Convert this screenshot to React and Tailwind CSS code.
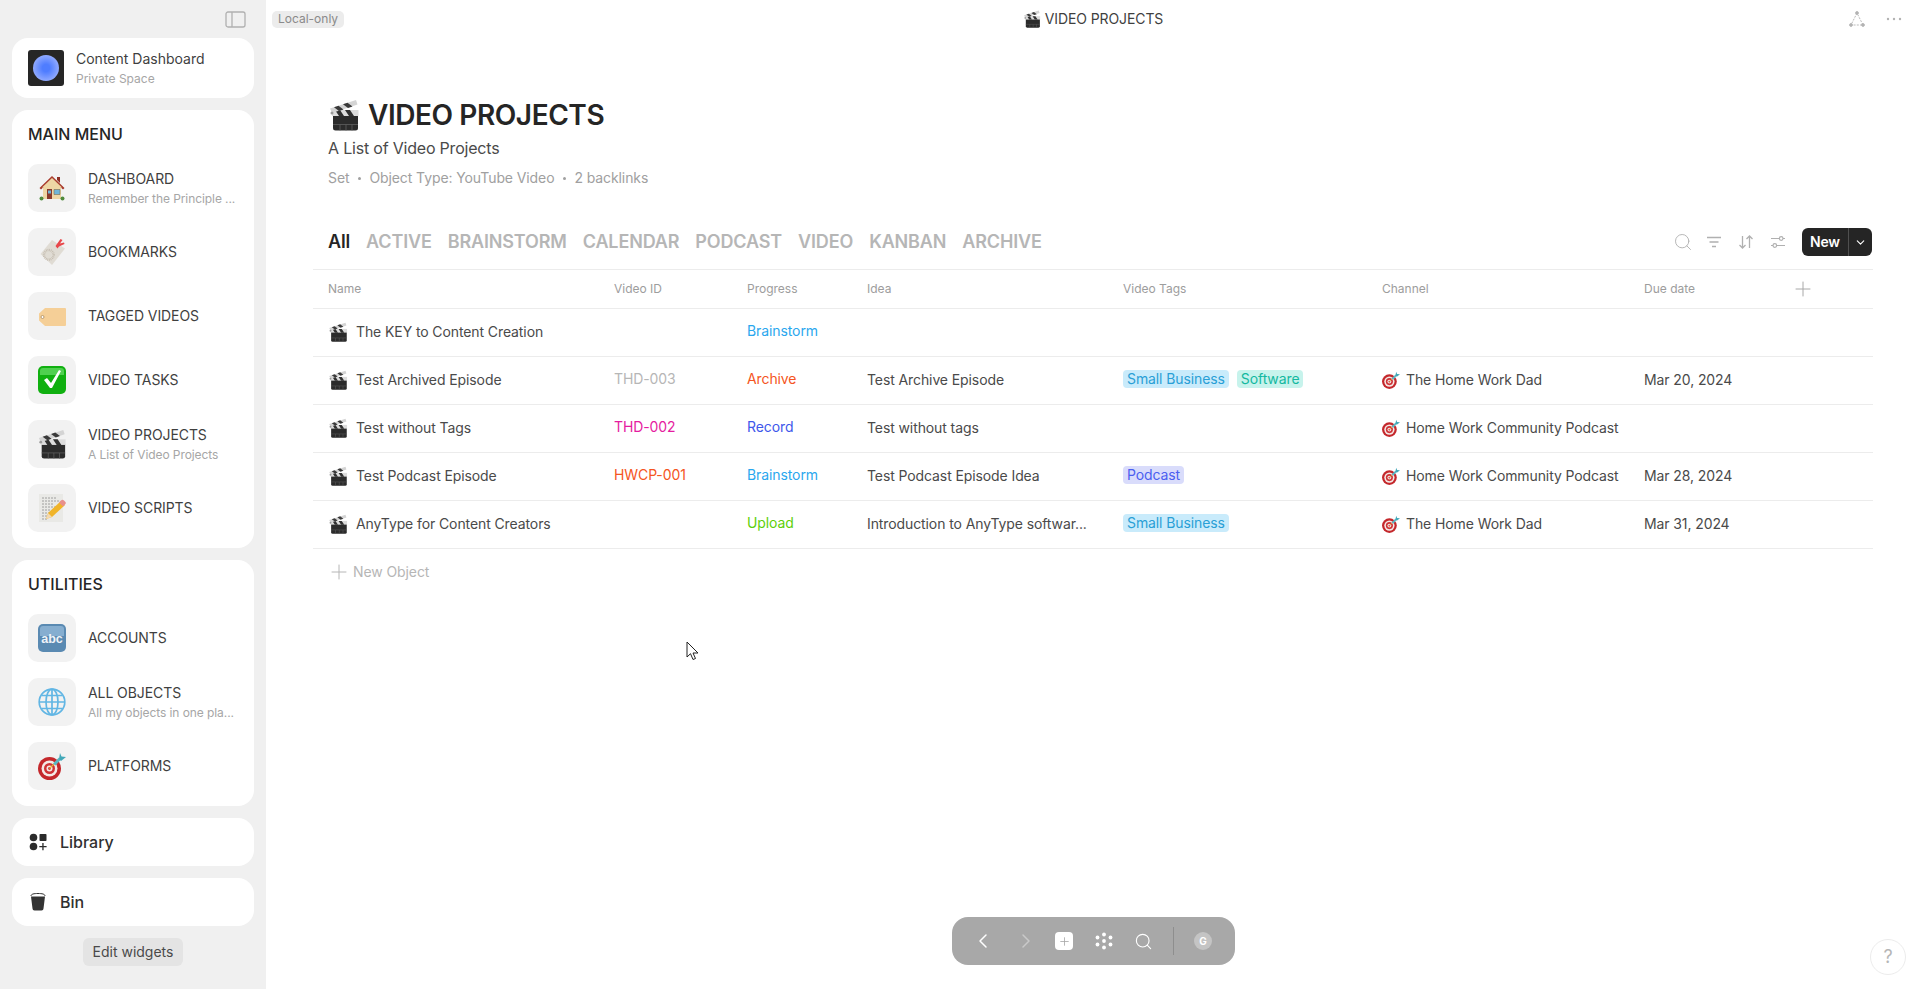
import React from "react";
import { ChevronLeft, ChevronRight, ChevronDown, Search, Plus } from "lucide-react";

const Clapper = ({ size = 20 }) => (
  <svg width={size} height={size} viewBox="0 0 32 32" className="shrink-0">
    <path d="M5 16h25v13a2.500 2.500 0 0 1-2.500 2.500h-20A2.500 2.500 0 0 1 5 29z" fill="#2b2b2b" />
    <path d="M5 25.500h25M12 25.500v6M18 25.500v6M24 25.500v6" stroke="#5f5f5f" strokeWidth="0.800" />
    <path d="M4 11h26.500v6H4z" fill="#dcdcdc" />
    <path d="M7 11l4 6h5l-4-6zM17 11l4 6h5l-4-6z" fill="#303030" />
    <path d="M2 9.500L28 1l1.500 4.500L4 14z" fill="#d4d4d4" />
    <path d="M6 8.200l5 3.800 4.500-1.500-5-3.800zM15 5.200l5 3.800 4.500-1.500-5-3.800z" fill="#3a3a3a" />
    <circle cx="4" cy="14" r="1.500" fill="#9a9a9a" />
  </svg>
);

const House = () => (
  <svg width="28" height="28" viewBox="0 0 28 28">
    <path d="M5 13h18v12H5z" fill="#eed6a5" />
    <path d="M14 2L1.500 14l1.500 1.500L14 5.500 25 15.500l1.500-1.500z" fill="#a83a2c" />
    <path d="M14 4L4 13.500h20z" fill="#eed6a5" />
    <path d="M19 3h3v6l-3-3z" fill="#8f2f25" />
    <path d="M9 15h5v10H9z" fill="#8a3a2c" />
    <path d="M10 16.500h3v3h-3z" fill="#6fb5d8" />
    <path d="M16 15.500h6v5h-6z" fill="#6fb5d8" stroke="#7d6b4f" strokeWidth="0.6" />
    <circle cx="3.500" cy="24.500" r="2" fill="#4f8a3c" />
    <circle cx="24.500" cy="24.500" r="2" fill="#4f8a3c" />
  </svg>
);

const Bookmark = () => (
  <svg width="28" height="28" viewBox="0 0 28 28">
    <path d="M2.500 16L14 2l13 8.500L14 27z" fill="#e0dcd4" />
    <circle cx="10.800" cy="16.800" r="4.800" fill="none" stroke="#c4bcb0" strokeWidth="2.400" strokeDasharray="0.800 0.800" />
    <path d="M17.500 8l5-7 2 1-2.500 3.500 4-1 .500 1.500-5.500 2.500-1.500 2z" fill="#e8474a" />
  </svg>
);

const Label = () => (
  <svg width="28" height="28" viewBox="0 0 28 28">
    <path d="M7 6h20a1 1 0 0 1 1 1v16a1 1 0 0 1-1 1H7l-6-5.500v-7z" fill="#f5cf97" />
    <circle cx="4.500" cy="15" r="1.500" fill="#fff" stroke="#a88a5f" strokeWidth="0.800" />
  </svg>
);

const Check = () => (
  <svg width="28" height="28" viewBox="0 0 28 28">
    <rect width="28" height="28" rx="5" fill="#10b010" />
    <path d="M2 5a3 3 0 0 1 3-3h18a3 3 0 0 1 3 3v4H2z" fill="#4fd04f" />
    <path d="M6 14l6 8 2 0 9-17-2-1-8 13-4-5z" fill="#fff" />
  </svg>
);

const Memo = () => (
  <svg width="28" height="28" viewBox="0 0 28 28">
    <path d="M1 0h24v28H1z" fill="#e9e9e6" />
    <path d="M4 4h15M4 7h17M4 10h12M4 13h16M4 16h9M4 19h8M4 22h6M4 25h5" stroke="#8a8a8a" strokeWidth="0.800" strokeDasharray="2 1" />
    <path d="M8 25l2-6 13-12 4 4-13 12z" fill="#f0b429" />
    <path d="M8 25l2-6 4 4z" fill="#f3d9b1" />
    <path d="M21 8.500l2-2a2 2 0 0 1 3 0l1 1a2 2 0 0 1 0 3l-2 2z" fill="#e8908c" />
  </svg>
);

const Abc = () => (
  <svg width="28" height="28" viewBox="0 0 28 28">
    <rect width="28" height="28" rx="5" fill="#5a8ab2" />
    <path d="M2 5a3 3 0 0 1 3-3h18a3 3 0 0 1 3 3v7H2z" fill="#86aed0" />
    <text x="14" y="18.500" textAnchor="middle" fontSize="12.500" fontWeight="700" fill="#eef3f8" fontFamily="Liberation Sans, sans-serif">abc</text>
  </svg>
);

const Globe = () => (
  <svg width="28" height="28" viewBox="0 0 28 28" fill="none" stroke="#62b6e4" strokeWidth="1.700">
    <circle cx="14" cy="14" r="12.800" />
    <ellipse cx="14" cy="14" rx="6" ry="12.800" />
    <path d="M14 1v26M1.500 14h25M3.500 7.500h21M3.500 20.500h21" />
  </svg>
);

const Target = ({ size = 28 }) => (
  <svg width={size} height={size} viewBox="0 0 28 28" className="shrink-0">
    <circle cx="11.500" cy="16.500" r="11.500" fill="#c4282c" />
    <circle cx="11.500" cy="16.500" r="8" fill="#f4e9e6" />
    <circle cx="11.500" cy="16.500" r="5.500" fill="#cf3236" />
    <circle cx="11.500" cy="16.500" r="3" fill="#f4e9e6" />
    <circle cx="11.500" cy="16.500" r="1.400" fill="#cf3236" />
    <path d="M11.500 16.500L21 7" stroke="#e8b23a" strokeWidth="1.200" />
    <path d="M15 11.500l6-6 2 2-5.500 6z" fill="#59b7c4" />
    <path d="M21 7l1-6 1.500 3.500L28 5l-5 4z" fill="#42a8b8" />
  </svg>
);

const MENU = [
  { icon: <House />, name: "DASHBOARD", desc: "Remember the Principle ..." },
  { icon: <Bookmark />, name: "BOOKMARKS" },
  { icon: <Label />, name: "TAGGED VIDEOS" },
  { icon: <Check />, name: "VIDEO TASKS" },
  { icon: <Clapper size={30} />, name: "VIDEO PROJECTS", desc: "A List of Video Projects" },
  { icon: <Memo />, name: "VIDEO SCRIPTS" },
];

const UTILITIES = [
  { icon: <Abc />, name: "ACCOUNTS" },
  { icon: <Globe />, name: "ALL OBJECTS", desc: "All my objects in one pla..." },
  { icon: <Target />, name: "PLATFORMS" },
];

const TABS = ["ACTIVE", "BRAINSTORM", "CALENDAR", "PODCAST", "VIDEO", "KANBAN", "ARCHIVE"];

const HOME_DAD = "The Home Work Dad";
const COMMUNITY = "Home Work Community Podcast";

const SMALL_BUSINESS = { label: "Small Business", className: "bg-[#c9ebfb] text-[#2a9fd6]" };
const SOFTWARE = { label: "Software", className: "bg-[#c7f3ec] text-[#14b8a0]" };
const PODCAST = { label: "Podcast", className: "bg-[#d9dcfb] text-[#4b5ff0]" };

const BRAINSTORM = { label: "Brainstorm", className: "text-[#2aa7ee]" };

const ROWS = [
  { name: "The KEY to Content Creation", progress: BRAINSTORM, tags: [] },
  {
    name: "Test Archived Episode",
    id: { label: "THD-003", className: "text-[#b6b6b6]" },
    progress: { label: "Archive", className: "text-[#f55522]" },
    idea: "Test Archive Episode",
    tags: [SMALL_BUSINESS, SOFTWARE],
    channel: HOME_DAD,
    due: "Mar 20, 2024",
  },
  {
    name: "Test without Tags",
    id: { label: "THD-002", className: "text-[#e51ca0]" },
    progress: { label: "Record", className: "text-[#3e58eb]" },
    idea: "Test without tags",
    tags: [],
    channel: COMMUNITY,
  },
  {
    name: "Test Podcast Episode",
    id: { label: "HWCP-001", className: "text-[#f55522]" },
    progress: BRAINSTORM,
    idea: "Test Podcast Episode Idea",
    tags: [PODCAST],
    channel: COMMUNITY,
    due: "Mar 28, 2024",
  },
  {
    name: "AnyType for Content Creators",
    progress: { label: "Upload", className: "text-[#5dcf0a]" },
    idea: "Introduction to AnyType softwar...",
    tags: [SMALL_BUSINESS],
    channel: HOME_DAD,
    due: "Mar 31, 2024",
  },
];

const GRID = "grid grid-cols-[301px_133px_120px_256px_259px_262px_1fr]";

const Card = ({ className = "", children }) => (
  <div className={`bg-white rounded-2xl ${className}`}>{children}</div>
);

const WidgetGroup = ({ title, items }) => (
  <Card className="px-4 pt-3 pb-4">
    <div className="text-base leading-6 font-medium text-[#252525] h-[42px]">{title}</div>
    <div className="flex flex-col gap-4">
      {items.map((item) => (
        <div key={item.name} className="flex items-center gap-3">
          <div className="w-12 h-12 shrink-0 rounded-[10px] bg-[#f2f2f2] flex items-center justify-center">
            {item.icon}
          </div>
          <div className={`min-w-0 tracking-[-0.08px] ${item.desc ? "pt-0.5" : ""}`}>
            <div className="text-sm leading-5 text-[#3f3f3f] whitespace-nowrap">{item.name}</div>
            {item.desc && (
              <div className="text-xs leading-5 text-[#a6a6a6] whitespace-nowrap">{item.desc}</div>
            )}
          </div>
        </div>
      ))}
    </div>
  </Card>
);

const Sidebar = () => (
  <aside className="w-[266px] shrink-0 h-full bg-[#f0f0f0] px-3 flex flex-col">
    <div className="h-[38px] flex items-center justify-end pr-2 shrink-0">
      <svg width="21" height="17" viewBox="0 0 21 17" fill="none" stroke="#b0b0b0" strokeWidth="1.300">
        <rect x="1" y="1" width="19" height="15" rx="2" />
        <path d="M7 1v15" />
      </svg>
    </div>
    <div className="flex flex-col gap-3">
      <Card className="h-[60px] flex items-center pl-4 gap-3">
        <div className="w-9 h-9 rounded-[3px] bg-[#262626] flex items-center justify-center">
          <div className="w-[26px] h-[26px] rounded-full bg-[radial-gradient(circle,#4f7dff_20%,#8fa9ff_70%,#b4c4ff_100%)]" />
        </div>
        <div className="pt-0.5">
          <div className="text-sm leading-5 text-[#3f3f3f]">Content Dashboard</div>
          <div className="text-xs leading-5 text-[#a6a6a6]">Private Space</div>
        </div>
      </Card>
      <WidgetGroup title="MAIN MENU" items={MENU} />
      <WidgetGroup title="UTILITIES" items={UTILITIES} />
      <Card className="h-12 flex items-center pl-[17px] gap-[13px] text-base font-medium text-[#303030]">
        <svg width="18" height="18" viewBox="0 0 18 18" fill="#2b2b2b">
          <circle cx="4.500" cy="4.500" r="3.800" />
          <rect x="10.500" y="1" width="7" height="7" rx="0.800" />
          <circle cx="4.500" cy="13.500" r="3.800" />
          <path d="M13.300 10h1.300v3h3v1.300h-3v3h-1.300v-3h-3V13h3z" />
        </svg>
        Library
      </Card>
      <Card className="h-12 flex items-center pl-[18px] gap-[14px] text-base font-medium text-[#303030]">
        <svg width="16" height="18" viewBox="0 0 16 18" fill="#333">
          <path d="M1 3.500h14l-1.500 12a2 2 0 0 1-2 2h-7a2 2 0 0 1-2-2z" />
          <path d="M1 3c0-2 3-2.500 7-2.500S15 1 15 3" fill="none" stroke="#333" strokeWidth="1" />
        </svg>
        Bin
      </Card>
    </div>
    <div className="flex justify-center mt-3">
      <div className="h-7 w-[100px] flex items-center justify-center rounded-md bg-[#e4e4e4] text-sm text-[#4a4a4a]">
        Edit widgets
      </div>
    </div>
  </aside>
);

const TopBar = () => (
  <div className="relative h-[38px] flex items-center justify-between pl-1.5 pr-[15px] shrink-0">
    <div className="h-[17px] px-1.5 rounded-[5px] bg-[#ececec] text-xs leading-4 text-[#8a8a8a]">Local-only</div>
    <div className="absolute left-0 right-0 top-0 h-[38px] flex items-center justify-center gap-1 text-sm tracking-[-0.1px] text-[#3f3f3f]">
      <Clapper size={18} />
      VIDEO PROJECTS
    </div>
    <div className="flex items-center gap-5">
      <svg width="18" height="18" viewBox="0 0 18 18" fill="none" stroke="#b3b3b3" strokeWidth="0.900">
        <path d="M9 3L3 15h12z" strokeDasharray="2 1.200" />
        <circle cx="9" cy="3" r="1.400" fill="#b3b3b3" />
        <circle cx="3" cy="15" r="1.400" fill="#b3b3b3" />
        <circle cx="15" cy="15" r="1.400" fill="#b3b3b3" />
      </svg>
      <svg width="16" height="4" viewBox="0 0 16 4" fill="#b3b3b3" className="mr-[3px]">
        <circle cx="2" cy="2" r="1.200" />
        <circle cx="8" cy="2" r="1.200" />
        <circle cx="14" cy="2" r="1.200" />
      </svg>
    </div>
  </div>
);

const Toolbar = () => (
  <div className="flex items-center h-7 mr-px">
    <Search size={20} strokeWidth={1.100} className="text-[#b0b0b0] mr-[13px]" />
    <svg width="16" height="16" viewBox="0 0 16 16" fill="none" stroke="#b0b0b0" strokeWidth="1.300" className="mr-4">
      <path d="M1 3.500h14M3.500 8h9M6 12.500h4" />
    </svg>
    <svg width="16" height="16" viewBox="0 0 16 16" fill="none" stroke="#b0b0b0" strokeWidth="1.300" className="mr-4">
      <path d="M4.500 2v12M1.500 11l3 3 3-3M11.500 14V2M8.500 5l3-3 3 3" />
    </svg>
    <svg width="16" height="16" viewBox="0 0 16 16" fill="none" stroke="#b0b0b0" strokeWidth="1.200" className="mr-[16px]">
      <path d="M1 4.500h8.500M13 4.500h2M1 11.500h2M6.500 11.500H15" />
      <circle cx="11.200" cy="4.500" r="1.800" />
      <circle cx="4.800" cy="11.500" r="1.800" />
    </svg>
    <div className="h-7 w-[70px] rounded-md bg-[#252525] flex items-center text-white text-sm font-semibold">
      <span className="w-[46px] text-center tracking-[-0.2px]">New</span>
      <span className="w-px h-full bg-[#4f4f4f]" />
      <span className="flex-1 flex justify-center">
        <ChevronDown size={13} strokeWidth={2} />
      </span>
    </div>
  </div>
);

const Row = ({ row }) => (
  <div className={`${GRID} h-12 pb-0.5 border-b border-[#ececec] items-center text-sm tracking-[-0.1px] text-[#4a4a4a]`}>
    <div className="pl-[15px] flex items-center gap-2 whitespace-nowrap">
      <Clapper size={20} />
      {row.name}
    </div>
    <div className={`-mt-0.5 ${row.id ? row.id.className : ""}`}>{row.id && row.id.label}</div>
    <div className={`-mt-0.5 ${row.progress.className}`}>{row.progress.label}</div>
    <div className="whitespace-nowrap">{row.idea}</div>
    <div className="-mt-0.5 flex gap-2 text-sm">
      {row.tags.map((tag) => (
        <span key={tag.label} className={`h-[18px] leading-[18px] px-1 rounded ${tag.className}`}>
          {tag.label}
        </span>
      ))}
    </div>
    <div className="flex items-center gap-1.5 whitespace-nowrap">
      {row.channel && <Target size={18} />}
      {row.channel}
    </div>
    <div>{row.due}</div>
  </div>
);

const Table = () => (
  <div>
    <div className={`${GRID} h-10 border-y border-[#ececec] items-center text-xs text-[#9d9d9d]`}>
      <div className="pl-[15px]">Name</div>
      <div>Video ID</div>
      <div>Progress</div>
      <div>Idea</div>
      <div>Video Tags</div>
      <div>Channel</div>
      <div className="flex items-center">
        <span className="w-[147px]">Due date</span>
        <Plus size={24} strokeWidth={1} className="text-[#a8a8a8]" />
      </div>
    </div>
    {ROWS.map((row) => (
      <Row key={row.name} row={row} />
    ))}
    <div className="h-[46px] pl-3.5 flex items-center gap-0.5 text-sm tracking-[-0.1px] text-[#b6b6b6]">
      <Plus size={24} strokeWidth={1} />
      New Object
    </div>
  </div>
);

const BottomNav = () => (
  <div className="absolute left-[686px] top-[917px] w-[283px] h-12 rounded-2xl bg-[#a8a8a8] flex items-center pl-[19px]">
    <ChevronLeft size={24} strokeWidth={1.500} className="text-white" />
    <ChevronRight size={24} strokeWidth={1.500} className="text-[#c9c9c9] ml-[19px]" />
    <div className="w-[18px] h-[18px] rounded-[4px] bg-white flex items-center justify-center ml-[17px]">
      <Plus size={13} strokeWidth={1.500} className="text-[#a8a8a8]" />
    </div>
    <svg width="18" height="18" viewBox="0 0 18 18" fill="#fff" className="ml-[22px]">
      <circle cx="9" cy="2.500" r="1.900" />
      <circle cx="9" cy="9" r="1.900" />
      <circle cx="9" cy="15.500" r="1.900" />
      <circle cx="2.500" cy="5.500" r="1.900" />
      <circle cx="15.500" cy="5.500" r="1.900" />
      <circle cx="2.500" cy="12.500" r="1.900" />
      <circle cx="15.500" cy="12.500" r="1.900" />
    </svg>
    <Search size={19} strokeWidth={1.400} className="text-white ml-[21px]" />
    <div className="w-px h-7 bg-[#8e8e8e] ml-[20px]" />
    <div className="w-[18px] h-[18px] rounded-full bg-[#c4c4c4] flex items-center justify-center ml-5 text-[10px] font-bold text-white">
      G
    </div>
  </div>
);

export default function App() {
  return (
    <div className="relative w-full h-[989px] overflow-hidden flex bg-white font-['Inter',sans-serif]">
      <Sidebar />
      <main className="relative flex-1 min-w-0 flex flex-col">
        <TopBar />
        <div className="pl-[47px] pr-[47px] flex flex-col">
          <div className="pl-[15px]">
            <h1 className="mt-[59px] flex items-center gap-2 text-[28px] leading-9 font-semibold tracking-[-0.43px] text-[#252525]">
              <Clapper size={32} />
              VIDEO PROJECTS
            </h1>
            <div className="mt-[3px] text-base leading-6 tracking-[-0.2px] text-[#4a4a4a]">A List of Video Projects</div>
            <div className="mt-2 flex items-center gap-[7.5px] text-sm leading-5 tracking-[-0.1px] text-[#a0a0a0]">
              <span>Set</span>
              <span className="w-[3px] h-[3px] mx-px rounded-full bg-[#a0a0a0]" />
              <span>Object Type: YouTube Video</span>
              <span className="w-[3px] h-[3px] mx-px rounded-full bg-[#a0a0a0]" />
              <span>2 backlinks</span>
            </div>
          </div>
          <div className="mt-10 h-7 mb-[13px] flex items-center justify-between pl-[15px]">
            <div className="flex items-center gap-4 text-lg font-semibold tracking-[-0.15px] text-[#b6b6b6]">
              <span className="text-[#252525]">All</span>
              {TABS.map((tab) => (
                <span key={tab}>{tab}</span>
              ))}
            </div>
            <Toolbar />
          </div>
          <Table />
        </div>
        <BottomNav />
        <div className="absolute left-[1604px] top-[939px] w-9 h-9 rounded-full border border-[#ececec] flex items-center justify-center text-lg text-[#b6b6b6]">
          ?
        </div>
      </main>
      <svg width="14" height="20" viewBox="0 0 14 20" className="absolute left-[686px] top-[641px]">
        <path d="M1 1v15l3.500-3.300L7 18.500l2.500-1-2.500-5.500h5z" fill="#fff" stroke="#222" strokeWidth="1" />
      </svg>
    </div>
  );
}
